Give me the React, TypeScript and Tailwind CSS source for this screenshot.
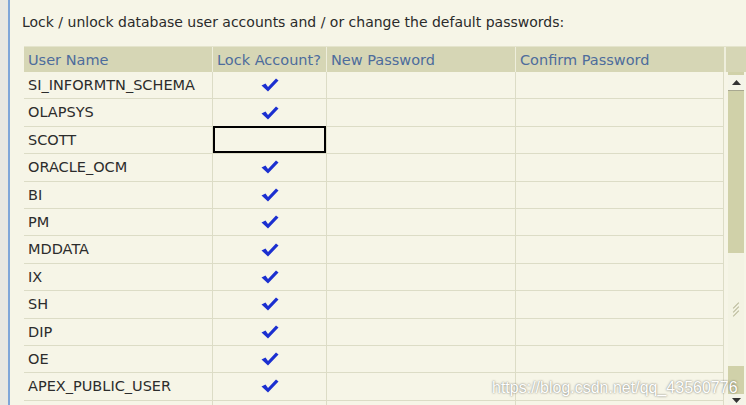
import React from 'react';

interface Account {
  name: string;
  locked: boolean;
  focused?: boolean;
}

const accounts: Account[] = [
  { name: 'SI_INFORMTN_SCHEMA', locked: true },
  { name: 'OLAPSYS', locked: true },
  { name: 'SCOTT', locked: false, focused: true },
  { name: 'ORACLE_OCM', locked: true },
  { name: 'BI', locked: true },
  { name: 'PM', locked: true },
  { name: 'MDDATA', locked: true },
  { name: 'IX', locked: true },
  { name: 'SH', locked: true },
  { name: 'DIP', locked: true },
  { name: 'OE', locked: true },
  { name: 'APEX_PUBLIC_USER', locked: true },
  { name: '', locked: false },
];

function Check() {
  return (
    <svg width="18" height="14" viewBox="0 0 18 14">
      <path d="M0.5 7.5 L4.5 5.5 L7 9 L15 0.5 L17.5 2.5 L7 13.5 Z" fill="#1b2fd0" />
    </svg>
  );
}

export default function App() {
  return (
    <div
      className="relative w-[746px] h-[405px] overflow-hidden flex bg-[#f6f5e7] text-[14.5px] text-[#2c2c2c]"
      style={{ fontFamily: '"DejaVu Sans", sans-serif' }}
    >
      {/* window edge */}
      <div className="w-[10px] shrink-0 bg-[#e8e8e2] border-r-2 border-[#7fa6d8]" />

      <div className="flex-1 flex flex-col pt-[13px]">
        <p className="pl-[12px] h-[19px] leading-[19px] text-[14px] text-[#2a2a2a]">
          Lock / unlock database user accounts and / or change the default passwords:
        </p>

        <div className="mt-[14px] ml-[14px] flex flex-col">
          {/* header */}
          <div className="flex h-[26px] bg-[#d6d6b5] text-[#4d6c9c] border-t border-[#e4e4cc]">
            <div className="w-[189px] pl-[4px] leading-[26px] border-r border-[#eeeedc]">User Name</div>
            <div className="w-[114px] pl-[4px] leading-[26px] border-r border-[#eeeedc]">Lock Account?</div>
            <div className="w-[189px] pl-[4px] leading-[26px] border-r border-[#eeeedc]">New Password</div>
            <div className="w-[210px] pl-[4px] leading-[26px] border-r-2 border-[#eeeedc]">Confirm Password</div>
            <div className="flex-1" />
          </div>

          <div className="flex">
            {/* rows */}
            <div className="w-[700px] flex flex-col">
              {accounts.map((a, i) => (
                <div key={i} className="flex h-[27.4px] border-b border-[#dcdcc6]">
                  <div className="w-[189px] pl-[4px] leading-[27px] border-r border-[#dcdcc6]">{a.name}</div>
                  <div className="w-[114px] border-r border-[#dcdcc6] flex items-center justify-center">
                    {a.focused ? (
                      <div className="w-[114px] h-[27px] border-2 border-black" />
                    ) : a.locked ? (
                      <Check />
                    ) : null}
                  </div>
                  <div className="w-[189px] border-r border-[#dcdcc6]" />
                  <div className="w-[208px] border-r border-[#dcdcc6]" />
                </div>
              ))}
            </div>

            {/* scrollbar */}
            <div className="ml-[4px] w-[16px] flex flex-col bg-[#d0d1a9]">
              <div className="h-[16px] mt-[3px] bg-[#f4f4e8] border-b border-[#a8a890] flex items-center justify-center">
                <svg width="9" height="5" viewBox="0 0 9 5">
                  <path d="M0 5 L4.5 0 L9 5 Z" fill="#333" />
                </svg>
              </div>
              <div className="h-[162px]" />
              <div className="h-[113px] bg-[#f3f3e3] flex flex-col items-center justify-center gap-[3px]">
                <div className="w-[8px] h-[1px] bg-[#b8b898] -rotate-45" />
                <div className="w-[8px] h-[1px] bg-[#b8b898] -rotate-45" />
                <div className="w-[8px] h-[1px] bg-[#b8b898] -rotate-45" />
              </div>
              <div className="h-[28px]" />
              <div className="h-[16px] bg-[#f4f4e8] flex items-start justify-center pt-[4px]">
                <svg width="9" height="5" viewBox="0 0 9 5">
                  <path d="M0 0 L9 0 L4.5 5 Z" fill="#333" />
                </svg>
              </div>
            </div>
          </div>
        </div>
      </div>

      {/* watermark */}
      <div
        className="absolute left-[492px] top-[376px] text-[16px] text-white"
        style={{ fontFamily: '"Liberation Sans", Arial, sans-serif', textShadow: '0 0 2px rgba(60,60,50,0.8)' }}
      >
        https://blog.csdn.net/qq_43560776
      </div>
    </div>
  );
}
